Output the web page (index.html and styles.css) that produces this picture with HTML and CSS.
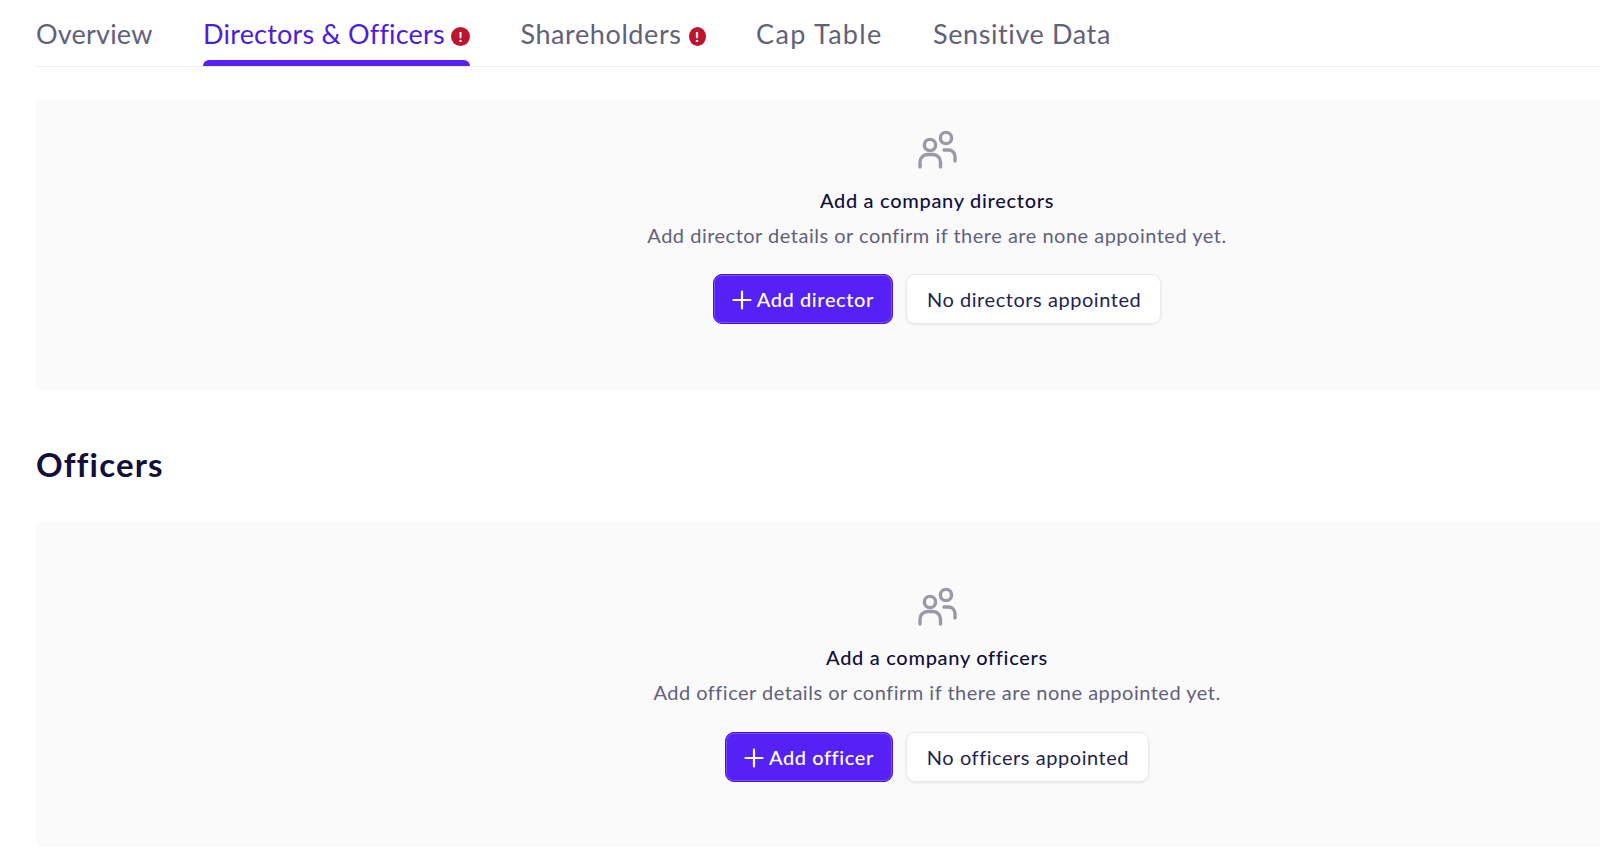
FILE: index.html
```html
<!DOCTYPE html>
<html lang="en">
<head>
<meta charset="utf-8">
<title>Directors &amp; Officers</title>
<link rel="stylesheet" href="styles.css">
</head>
<body>
<main class="page">
  <nav class="tabs">
    <a class="tab tab-tight">Overview</a>
    <a class="tab tab-tight tab-active">Directors &amp; Officers<span class="alert">!</span></a>
    <a class="tab">Shareholders<span class="alert alert-narrow">!</span></a>
    <a class="tab tab-wide">Cap Table</a>
    <a class="tab">Sensitive Data</a>
  </nav>
  <section class="panel panel-first">
    <svg class="people" viewBox="0 0 40 40" fill="none" stroke="#9a9aa6" stroke-width="3.4" stroke-linecap="round"><circle cx="13" cy="16" r="5.600"/><circle cx="29" cy="9" r="5.600"/><path d="M3 38v-5a7.500 7.500 0 0 1 7.500-7.500h5.500A7.500 7.500 0 0 1 23.500 33v5"/><path d="M27 21h4.500a6.500 6.500 0 0 1 6.500 6.500V32"/></svg>
    <h3 class="empty-title">Add a company directors</h3>
    <p class="empty-text">Add director details or confirm if there are none appointed yet.</p>
    <div class="actions">
      <button class="btn btn-primary"><svg class="plus" viewBox="0 0 20 20" stroke="#fff" stroke-width="2.2" stroke-linecap="round"><path d="M10 1.500v17M1.500 10h17"/></svg>Add director</button>
      <button class="btn btn-plain">No directors appointed</button>
    </div>
  </section>
  <h2 class="section-title">Officers</h2>
  <section class="panel panel-second">
    <svg class="people" viewBox="0 0 40 40" fill="none" stroke="#9a9aa6" stroke-width="3.4" stroke-linecap="round"><circle cx="13" cy="16" r="5.600"/><circle cx="29" cy="9" r="5.600"/><path d="M3 38v-5a7.500 7.500 0 0 1 7.500-7.500h5.500A7.500 7.500 0 0 1 23.500 33v5"/><path d="M27 21h4.500a6.500 6.500 0 0 1 6.500 6.500V32"/></svg>
    <h3 class="empty-title">Add a company officers</h3>
    <p class="empty-text">Add officer details or confirm if there are none appointed yet.</p>
    <div class="actions actions-low">
      <button class="btn btn-primary"><svg class="plus" viewBox="0 0 20 20" stroke="#fff" stroke-width="2.2" stroke-linecap="round"><path d="M10 1.500v17M1.500 10h17"/></svg>Add officer</button>
      <button class="btn btn-plain">No officers appointed</button>
    </div>
  </section>
</main>
</body>
</html>
```
FILE: styles.css
```css
* { box-sizing: border-box; }
html, body { margin: 0; height: 100%; overflow: hidden; background: #fff; }
body { font-family: Lato, "Noto Sans", sans-serif; color: #120f3a; }
.page { padding-left: 36px; width: 1838px; }
.tabs { display: flex; gap: 50.5px; height: 67px; border-bottom: 1px solid #eeeef1; }
.tab { display: flex; align-items: center; height: 66px; padding-top: 1px; color: #62617a; font-size: 27px; letter-spacing: 0.6px; position: relative; }
.tab-tight { letter-spacing: 0.2px; }
.tab-wide { letter-spacing: 1.3px; }
.tab-active { color: #4a1de0; }
.tab-active::after { content: ""; position: absolute; left: 0; right: 0; bottom: 0; height: 6px; background: #5521f5; border-radius: 6px 6px 0 0; }
.alert { display: flex; align-items: center; justify-content: center; flex: none; width: 19px; height: 19px; margin: 6px 0 0 6px; border-radius: 50%; background: #bb1530; color: #fff; font-size: 14px; font-weight: 900; letter-spacing: 0; }
.alert-narrow { width: 17px; margin-left: 7px; }
.panel { display: flex; flex-direction: column; align-items: center; background: #fafafb; border-radius: 6px; }
.panel-first { margin-top: 33px; height: 290px; padding-top: 29px; }
.panel-second { height: 325px; padding-top: 64px; }
.people { width: 40px; height: 40px; display: block; }
.empty-title { margin: 19px 0 0; height: 24px; line-height: 24px; font-size: 20px; font-weight: 500; letter-spacing: 0.7px; color: #120f3a; }
.empty-text { margin: 11px 0 0; height: 24px; line-height: 24px; font-size: 20px; letter-spacing: 0.5px; color: #62617a; }
.actions { display: flex; gap: 13px; margin-top: 27px; align-items: center; }
.actions-low { margin-top: 28px; }
.btn { display: flex; align-items: center; justify-content: center; height: 50px; padding-bottom: 2px; border-radius: 9px; font: inherit; font-size: 20px; white-space: nowrap; }
.btn-primary { gap: 5px; padding-left: 18px; padding-right: 18px; background: #5521f5; color: #fff; font-weight: 500; letter-spacing: 0.6px; border: 1px solid #4414d8; box-shadow: inset 0 0 0 1px #7a52f7; }
.btn-plain { padding-left: 20px; padding-right: 19px; background: #fff; color: #241f4d; letter-spacing: 0.55px; border: 1px solid #e9e9ec; box-shadow: 0 1px 3px rgba(20, 20, 50, .08); }
.plus { width: 20px; height: 20px; display: block; margin-top: 2px; }
.section-title { margin: 56px 0 40px; height: 36px; line-height: 36px; font-size: 33px; font-weight: 700; letter-spacing: 1.15px; color: #120f3a; }
```
